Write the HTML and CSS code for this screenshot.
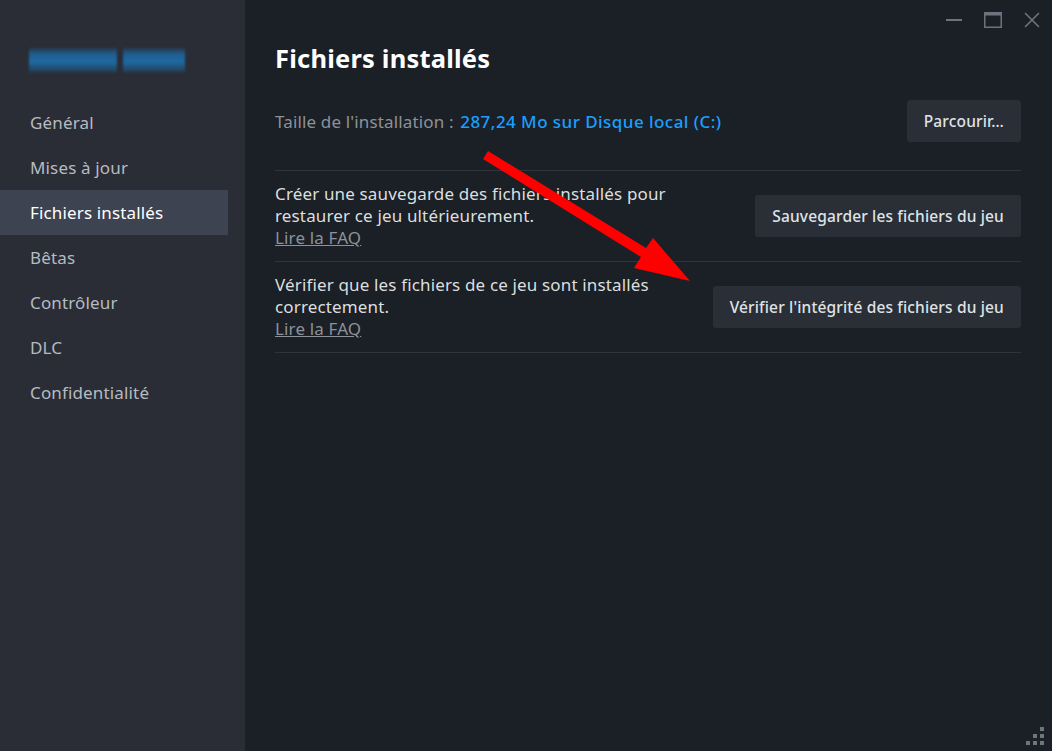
FILE: index.html
```html
<!DOCTYPE html>
<html lang="fr">
<head>
<meta charset="utf-8">
<title>Fichiers installés</title>
<link rel="stylesheet" href="styles.css">
</head>
<body>
<div class="app">
  <aside class="sidebar">
    <div class="game-name">
      <span class="blur blur-a"></span>
      <span class="blur blur-b"></span>
    </div>
    <nav class="nav">
      <div class="nav-item">Général</div>
      <div class="nav-item">Mises à jour</div>
      <div class="nav-item active">Fichiers installés</div>
      <div class="nav-item">Bêtas</div>
      <div class="nav-item">Contrôleur</div>
      <div class="nav-item">DLC</div>
      <div class="nav-item">Confidentialité</div>
    </nav>
  </aside>
  <main class="main">
    <div class="titlebar">
      <svg class="wc" width="20" height="20" viewBox="0 0 20 20"><rect x="2" y="9" width="16" height="2" fill="#6b747e"/></svg>
      <svg class="wc" width="20" height="20" viewBox="0 0 20 20"><rect x="1.75" y="2.75" width="16.5" height="14.5" fill="none" stroke="#6b747e" stroke-width="1.5"/><rect x="1" y="2" width="18" height="3.5" fill="#6b747e"/></svg>
      <svg class="wc" width="20" height="20" viewBox="0 0 20 20"><path d="M3 3 L17 17 M17 3 L3 17" stroke="#6b747e" stroke-width="1.6"/></svg>
    </div>
    <h1 class="title">Fichiers installés</h1>
    <div class="size-row">
      <div class="size-text"><span class="label">Taille de l'installation :</span> <span class="value">287,24 Mo sur Disque local (C:)</span></div>
      <button class="btn">Parcourir…</button>
    </div>
    <div class="row">
      <div class="row-text">
        <div>Créer une sauvegarde des fichiers installés pour<br>restaurer ce jeu ultérieurement.</div>
        <a class="faq">Lire la FAQ</a>
      </div>
      <button class="btn">Sauvegarder les fichiers du jeu</button>
    </div>
    <div class="row last">
      <div class="row-text">
        <div>Vérifier que les fichiers de ce jeu sont installés<br>correctement.</div>
        <a class="faq">Lire la FAQ</a>
      </div>
      <button class="btn">Vérifier l'intégrité des fichiers du jeu</button>
    </div>
  </main>
</div>
<svg class="arrow" width="1052" height="751" viewBox="0 0 1052 751">
  <polygon points="488,151 646,248 653,238 690,281 634,268 641,257 483,159" fill="#ff0000"/>
</svg>
<svg class="grip" width="20" height="20" viewBox="0 0 20 20">
  <rect x="14" y="2" width="4" height="4" fill="#6f757d"/>
  <rect x="7" y="9" width="4" height="4" fill="#6f757d"/>
  <rect x="14" y="9" width="4" height="4" fill="#6f757d"/>
  <rect x="0" y="16" width="4" height="4" fill="#6f757d"/>
  <rect x="7" y="16" width="4" height="4" fill="#6f757d"/>
  <rect x="14" y="16" width="4" height="4" fill="#6f757d"/>
</svg>
</body>
</html>
```
FILE: styles.css
```css
html, body {
  margin: 0;
  padding: 0;
  width: 1052px;
  height: 751px;
  overflow: hidden;
  background: #1b1f26;
  font-family: "Noto Sans", "Open Sans", sans-serif;
}
.app {
  display: flex;
  height: 751px;
}
.sidebar {
  width: 245px;
  flex: none;
  background: #2a2d35;
  display: flex;
  flex-direction: column;
}
.game-name {
  display: flex;
  gap: 6px;
  padding: 48px 0 0 29px;
  height: 100px;
  box-sizing: border-box;
}
.blur {
  display: block;
  height: 25px;
  background: linear-gradient(180deg, #27394d 0%, #1f5d8f 25%, #1f6aa3 55%, #22496b 85%, #2a3440 100%);
  filter: blur(1px);
}
.blur-a { width: 88px; }
.blur-b { width: 62px; }
.nav {
  display: flex;
  flex-direction: column;
}
.nav-item {
  height: 45px;
  width: 228px;
  box-sizing: border-box;
  padding-left: 30px;
  display: flex;
  align-items: center;
  font-size: 17px;
  letter-spacing: 0.15px;
  color: #b6bbc1;
}
.nav-item.active {
  background: #3d4350;
  color: #ffffff;
}
.main {
  flex: 1;
  padding: 0 31px 0 30px;
  display: flex;
  flex-direction: column;
}
.titlebar {
  height: 40px;
  display: flex;
  justify-content: flex-end;
  align-items: flex-start;
  gap: 19px;
  margin-right: -21px;
  padding-top: 10px;
  box-sizing: border-box;
}
.wc { display: block; }
.title {
  margin: 0;
  font-size: 25.5px;
  letter-spacing: 0.2px;
  line-height: 36px;
  font-weight: 700;
  color: #ffffff;
}
.size-row {
  margin-top: 24px;
  height: 42px;
  margin-bottom: 28px;
  display: flex;
  align-items: center;
  justify-content: space-between;
  font-size: 17px;
  letter-spacing: 0.15px;
}
.label { color: #8b929a; }
.value {
  color: #1a9fff;
  font-weight: 500;
  letter-spacing: 0.45px;
  margin-left: 2px;
}
.btn {
  font-family: "Noto Sans", "Open Sans", sans-serif;
  font-size: 15.5px;
  letter-spacing: 0.15px;
  font-weight: 500;
  color: #dfe3e6;
  background: #2a2e37;
  border: none;
  border-radius: 3px;
  height: 42px;
  padding: 0 17px;
  cursor: pointer;
}
.row {
  border-top: 1px solid #2f343c;
  padding: 12px 0;
  display: flex;
  align-items: center;
  justify-content: space-between;
}
.row.last {
  border-bottom: 1px solid #2f343c;
}
.row-text {
  font-size: 17px;
  letter-spacing: 0.15px;
  line-height: 22px;
  color: #dcdedf;
}
.faq {
  color: #8b929a;
  text-decoration: underline;
}
.arrow {
  position: absolute;
  left: 0;
  top: 0;
  pointer-events: none;
}
.grip {
  position: absolute;
  right: 6px;
  bottom: 6px;
}
```
